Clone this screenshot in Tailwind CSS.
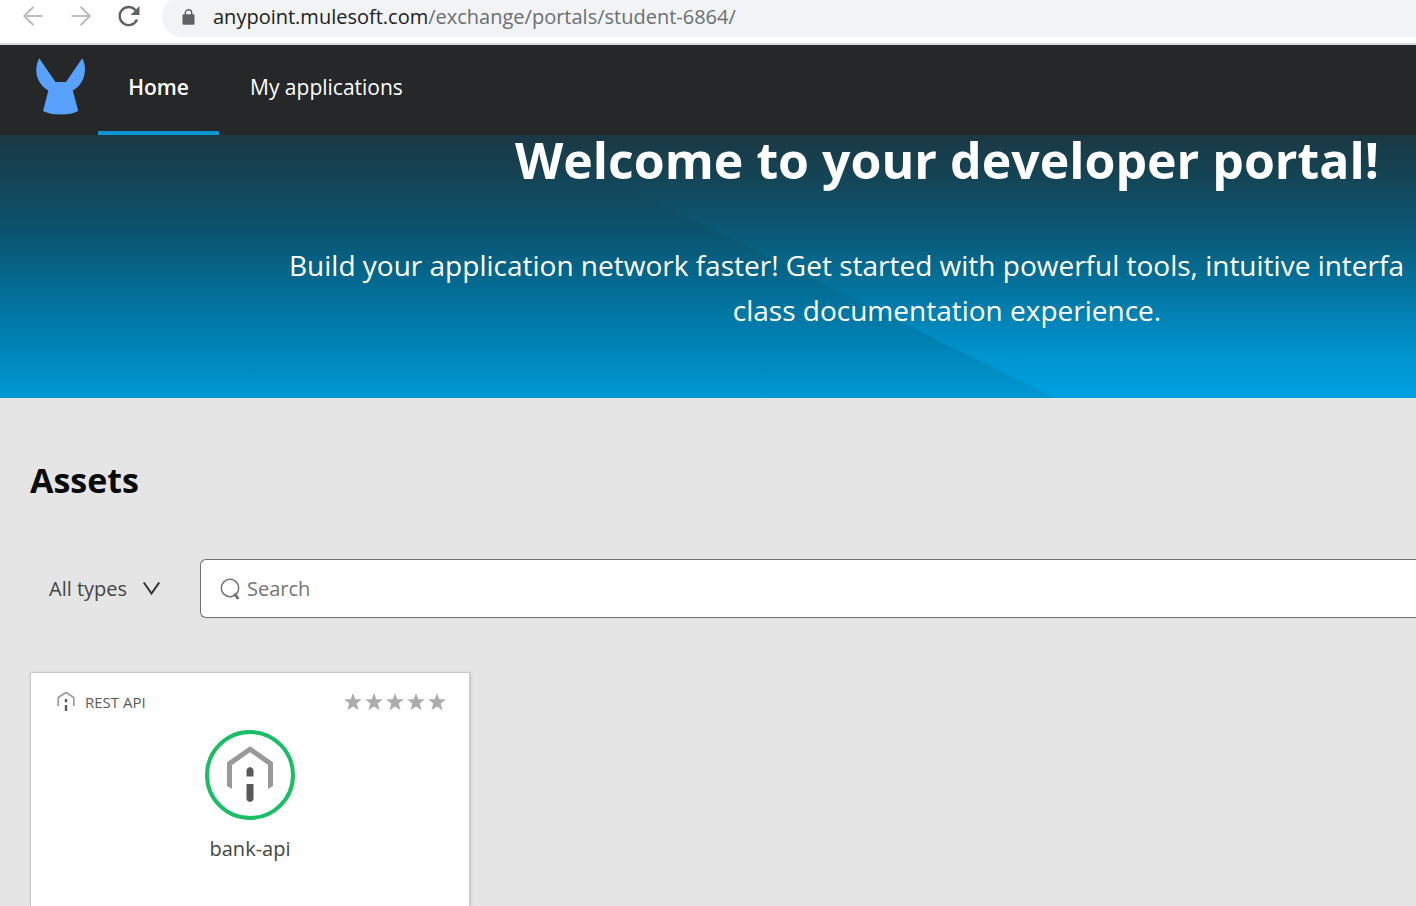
<!DOCTYPE html>
<html lang="en">
<head>
<meta charset="utf-8">
<meta name="viewport" content="width=device-width, initial-scale=1">
<title>Developer portal</title>
<script src="https://cdn.jsdelivr.net/npm/@tailwindcss/browser@4"></script>
</head>
<body class="flex min-h-screen flex-col overflow-x-hidden bg-[#e5e5e5] font-['Open_Sans','Noto_Sans',sans-serif] text-[#0b0b0b]">
<div class="flex h-[45px] items-start overflow-hidden border-b-2 border-[#dadce0] bg-white pl-5">
  <div class="flex h-8 items-center gap-6 pr-[22px]">
    <button type="button" aria-label="Back" class="text-[#babcbe]">
      <svg class="size-6" viewBox="0 0 24 24" fill="none" stroke="currentColor" stroke-width="2"><path d="M22.500 12H4M13.500 2.700L4.200 12l9.300 9.300"/></svg>
    </button>
    <button type="button" aria-label="Forward" class="text-[#babcbe]">
      <svg class="size-6" viewBox="0 0 24 24" fill="none" stroke="currentColor" stroke-width="2"><path d="M3.500 12H22M12.500 2.700l9.300 9.300-9.300 9.300"/></svg>
    </button>
    <button type="button" aria-label="Reload" class="text-[#5f6368]">
      <svg class="size-6" viewBox="0 0 24 24" fill="none"><path d="M21 15.500A9 9 0 1 1 19.500 6.200" stroke="currentColor" stroke-width="2.400"/><path d="M23.500 2v9h-9z" fill="currentColor"/></svg>
    </button>
  </div>
  <div class="-mt-1 flex h-[41px] flex-1 items-center gap-[18px] rounded-l-full bg-[#f1f3f4] pl-5">
    <svg class="h-4 w-[13px] text-[#5f6368]" viewBox="0 0 13 16" fill="none"><rect x="0.500" y="5.300" width="12" height="10.500" rx="1.200" fill="currentColor"/><path d="M3.300 6V4a3.200 3.200 0 0 1 6.400 0v2" stroke="currentColor" stroke-width="1.400"/></svg>
    <p class="text-[20px] leading-6 text-[#6b6f73]"><span class="text-[#202124]">anypoint.mulesoft.com</span>/exchange/portals/student-6864/</p>
  </div>
</div>
<header class="flex h-[90px] items-stretch bg-[#262728] text-[21px] text-white">
  <a href="#" aria-label="MuleSoft" class="flex w-[98px] items-start pt-3 pl-9">
    <svg class="h-[58px] w-[50px]" viewBox="0 0 50 58" fill="#58a1ff"><path d="M3.200 1.200L19.500 25H30L46.300 1.200C49 6.500 49.800 12.500 48.200 18.500C46.600 25 42.500 30.500 36.800 33.500L42.200 54Q36 57.500 24.800 57.500Q13.500 57.500 7 54L12.400 33.500C6.700 30.500 2.500 25 .9 18.500C-.5 12.500 .5 6.500 3.200 1.200Z"/></svg>
  </a>
  <nav class="flex">
    <a href="#" class="flex w-[121px] items-center justify-center border-b-4 border-[#0d95d2] pb-[2px] leading-7 font-semibold">Home</a>
    <a href="#" class="flex items-center px-[31px] pb-[6px] leading-7">My applications</a>
  </nav>
</header>
<section class="relative h-[263px] overflow-hidden bg-[linear-gradient(to_bottom,#1b3843_0%,#0a5570_38%,#046b92_57%,#007fb0_76%,#0098d4_100%)] text-white">
  <svg class="absolute inset-0 size-full" viewBox="0 0 1416 263" preserveAspectRatio="none" aria-hidden="true">
    <defs><linearGradient id="glow" x1="0" y1="0" x2="0" y2="1"><stop offset="0.150" stop-color="#00a6e8" stop-opacity="0"/><stop offset="0.600" stop-color="#00a6e8" stop-opacity="0.120"/><stop offset="1" stop-color="#00a6e8" stop-opacity="0.600"/></linearGradient></defs>
    <path d="M520 0L1055 263H1416V0Z" fill="url(#glow)"/>
  </svg>
  <div class="relative flex w-[1894px] flex-col items-center">
    <h1 class="text-[50px] leading-[50px] font-bold">Welcome to your developer portal!</h1>
    <div class="mt-[58px] w-[1316px] text-[28px] leading-[45px] whitespace-nowrap">
      <p>Build your application network faster! Get started with powerful tools, intuitive interfa</p>
      <p class="text-center">class documentation experience.</p>
    </div>
  </div>
</section>
<main class="flex flex-1 flex-col pl-[30px]">
  <h2 class="pt-14 text-[34px] leading-[52px] font-bold">Assets</h2>
  <div class="mt-[53px] flex h-[59px] items-stretch text-[20px]">
    <button type="button" class="flex w-[170px] items-center gap-4 pl-[19px] text-[#444]">All types
      <svg class="h-[14px] w-[18px]" viewBox="0 0 18 14" fill="none" stroke="#333" stroke-width="2"><path d="M0.800 0.500L8.500 11.500L16.200 0.500"/></svg>
    </button>
    <label class="flex flex-1 items-center gap-[5px] rounded-l-md border border-r-0 border-[#6f6f6f] bg-white pl-[19px]">
      <svg class="size-[22px]" viewBox="0 0 22 22" fill="none" stroke="#737475"><circle cx="10" cy="10" r="8.700" stroke-width="1.500"/><path d="M14.500 15.500l3.800 5.500" stroke-width="3"/></svg>
      <input type="text" aria-label="Search" placeholder="Search" class="min-w-0 flex-1 bg-transparent outline-none placeholder:text-[#757575]">
    </label>
  </div>
  <article class="mt-[54px] flex w-[440px] flex-1 flex-col border border-b-0 border-[#c8c8c8] bg-white shadow-[1px_1px_3px_rgba(0,0,0,0.15)]">
    <div class="flex items-center justify-between pt-[18px] pr-[22px] pl-6">
      <div class="flex items-center gap-2 text-[15px] leading-[22px] text-[#5a5a5a]">
        <svg class="size-[22px]" viewBox="0 0 22 22" fill="none"><path d="M3.200 15V6.500L11 1.500L18.800 6.500V15" stroke="#98999b" stroke-width="1.600"/><path d="M11 8v3.200M11 14v6" stroke="#58595b" stroke-width="2.400"/></svg>
        REST API
      </div>
      <svg class="h-[18px] w-[103px]" viewBox="0 0 103 18" fill="#acacac" role="img" aria-label="No rating">
        <defs><path id="star" d="M9 0L11.300 6.300H17.800L12.700 10.500L14.600 17.200L9 13.400L3.400 17.200L5.300 10.500L0.200 6.300H6.700Z"/></defs>
        <use href="#star"/><use href="#star" x="21"/><use href="#star" x="42"/><use href="#star" x="63"/><use href="#star" x="84"/>
      </svg>
    </div>
    <div class="mt-4 flex flex-col items-center">
      <svg class="size-[92px]" viewBox="0 0 92 92" fill="none"><circle cx="46" cy="46" r="43" stroke="#1abe64" stroke-width="4"/><path d="M23 33.200L46 17.200L69 33.200V57L64 60V36L46 23.300L28 36V60L23 57Z" fill="#98999b"/><path d="M42.500 47.500V41Q43 38.500 46 38Q49 38.500 49.500 41V47.500ZM42.500 55H49.500V70.500Q48.500 72.500 46 73Q43.500 72.500 42.500 70.500Z" fill="#58595b"/></svg>
      <h3 class="mt-[14px] text-[20px] leading-7 text-[#444]">bank-api</h3>
    </div>
  </article>
</main>
</body>
</html>
